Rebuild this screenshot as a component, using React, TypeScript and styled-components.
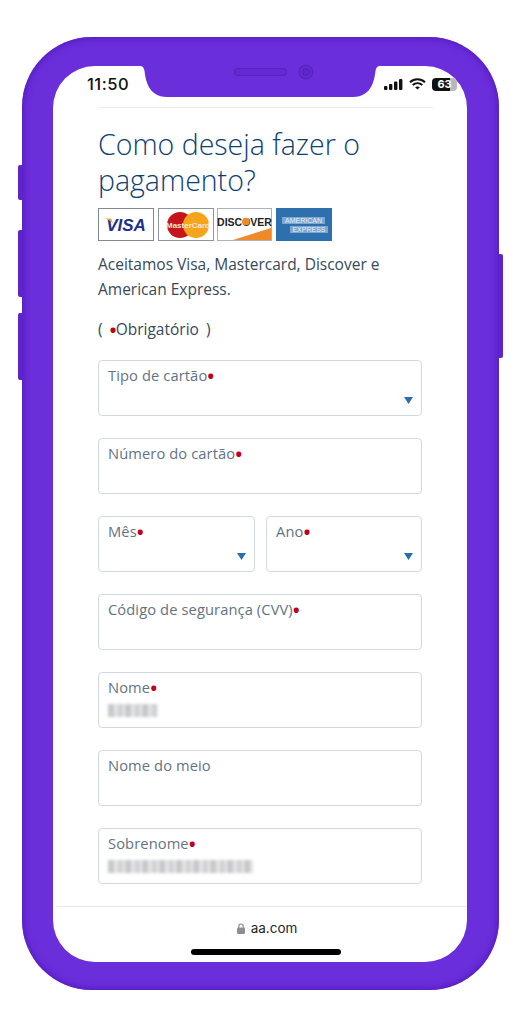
import React from 'react';
import styled, { createGlobalStyle } from 'styled-components';

const purple = '#6a2edb';
const textFont = `'Open Sans', 'Noto Sans', sans-serif`;

const GlobalStyle = createGlobalStyle`
  html, body {
    margin: 0;
    background: #fff;
  }
  * {
    box-sizing: border-box;
  }
`;

// --------------- Phone shell

const Page = styled.div`
  width: 522px;
  height: 1024px;
  padding: 37px 23px 0 22px;
  overflow: hidden;
`;

const Phone = styled.div`
  position: relative;
  width: 477px;
  height: 953px;
  padding: 29px 32px 28px 31px;
  border-radius: 70px;
  background: ${purple};
  box-shadow: inset 0 0 7px 1px #5119b8;
`;

const SideButton = styled.span<{ $side: 'left' | 'right'; $top: number; $height: number }>`
  position: absolute;
  ${(p) => p.$side}: -4px;
  top: ${(p) => p.$top}px;
  width: 4px;
  height: ${(p) => p.$height}px;
  border-radius: ${(p) => (p.$side === 'left' ? '2px 0 0 2px' : '0 2px 2px 0')};
  background: #5f25cb;
`;

const Screen = styled.div`
  display: flex;
  flex-direction: column;
  height: 896px;
  border-radius: 42px;
  background: #fff;
  overflow: hidden;
`;

const NotchShape = styled.svg`
  position: absolute;
  left: 118px;
  top: 23px;
`;

const Notch = () => (
  <NotchShape width="240" height="42" viewBox="0 0 240 42">
    <path
      d="M0 6C3 6 4 8 4.5 11C5.5 19 8 37 27 37H213C232 37 234.5 19 235.5 11C236 8 237 6 240 6Z"
      fill={purple}
    />
    <rect x="94.5" y="8.5" width="52" height="7" rx="3.5" fill="#6429d2" stroke="#5722bd" />
    <circle cx="166" cy="12" r="7" fill="#6429d2" stroke="#5722bd" />
    <circle cx="166" cy="12" r="3.5" fill="#5f26cc" stroke="#5722bd" />
  </NotchShape>
);

// --------------- Status bar

const StatusBar = styled.div`
  display: flex;
  justify-content: space-between;
  align-items: center;
  height: 41px;
  padding: 0 10px 5px 34px;
  flex: none;
`;

const Clock = styled.span`
  font-family: Inter, sans-serif;
  font-size: 16.5px;
  font-weight: 500;
  letter-spacing: 0.5px;
  color: #111;
`;

const StatusIcons = styled.div`
  display: flex;
  align-items: center;
  gap: 6px;
`;

const Battery = styled.span`
  display: flex;
  align-items: center;
  justify-content: center;
  width: 25px;
  height: 13px;
  border-radius: 4px;
  background: linear-gradient(90deg, #111 0 70%, #b9b9b9 70% 100%);
  color: #fff;
  font-family: Inter, sans-serif;
  font-size: 11px;
  font-weight: 700;
`;

const Signal = () => (
  <svg width="19" height="11" viewBox="0 0 19 11" fill="#111">
    <rect x="0" y="7" width="3.4" height="4" rx="1" />
    <rect x="5" y="5" width="3.4" height="6" rx="1" />
    <rect x="10" y="2.5" width="3.4" height="8.5" rx="1" />
    <rect x="15" y="0" width="3.4" height="11" rx="1" />
  </svg>
);

const Wifi = () => (
  <svg width="17" height="12" viewBox="0 0 17 12" fill="none" stroke="#111" strokeWidth="2">
    <path d="M1 4.2C5.2 .3 11.8 .3 16 4.2" />
    <path d="M3.7 7C6.5 4.5 10.5 4.5 13.3 7" />
    <path d="M8.5 11.6L6.1 9.3C7.5 8.2 9.5 8.2 10.9 9.3Z" fill="#111" stroke="none" />
  </svg>
);

const Divider = styled.div`
  height: 1px;
  margin: 0 34px 0 45px;
  background: #ececec;
  flex: none;
`;

// --------------- Content

const Content = styled.main`
  flex: 1;
  min-height: 0;
  padding: 18px 45px 0;
  overflow: hidden;
  font-family: ${textFont};
`;

const Title = styled.h1`
  margin: 0;
  font-size: 28.5px;
  font-weight: 300;
  line-height: 36px;
  color: #0e3f73;
`;

const CardRow = styled.div`
  display: flex;
  gap: 3.5px;
  margin-top: 10px;
  height: 33px;
`;

const CardSvg = styled.svg`
  display: block;
  flex: none;
`;

const VisaCard = () => (
  <CardSvg width="56" height="33" viewBox="0 0 56 33">
    <rect x="0.5" y="0.5" width="55" height="32" fill="#fff" stroke="#7f8a95" />
    <text x="28" y="22.5" textAnchor="middle" fontFamily="'Liberation Sans', sans-serif" fontSize="17" fontWeight="700" fontStyle="italic" fill="#1b2f8c">
      VISA
    </text>
    <path d="M6.5 10.5H13L15 15.5C13 13 10 11.5 6.5 10.5Z" fill="#f0a033" />
  </CardSvg>
);

const MasterCard = () => (
  <CardSvg width="56" height="33" viewBox="0 0 56 33">
    <rect x="0.5" y="0.5" width="55" height="32" fill="#fff" stroke="#8b96a0" />
    <circle cx="22" cy="17" r="13" fill="#c4161c" />
    <circle cx="38" cy="17" r="13" fill="#f7a41d" />
    <text x="30" y="20" textAnchor="middle" fontFamily="'Liberation Sans', sans-serif" fontSize="8" fontWeight="700" fill="#f8e8d8">
      MasterCard
    </text>
  </CardSvg>
);

const DiscoverCard = () => (
  <CardSvg width="55" height="33" viewBox="0 0 55 33">
    <rect x="0.5" y="0.5" width="54" height="32" fill="#fff" stroke="#a9b3bc" />
    <path d="M16 32L54 20V32Z" fill="#ee8a2a" />
    <text x="27.5" y="17.5" textAnchor="middle" fontFamily="'Liberation Sans', sans-serif" fontSize="10.5" fontWeight="700" fill="#222">
      DISCOVER
    </text>
    <circle cx="29" cy="13.5" r="3.8" fill="#ee8a2a" />
  </CardSvg>
);

const AmexCard = () => (
  <CardSvg width="56" height="33" viewBox="0 0 56 33">
    <rect width="56" height="33" fill="#2e6fae" />
    <rect x="6" y="9" width="43" height="7" fill="#7ea7cf" />
    <rect x="14" y="18" width="38" height="7" fill="#7ea7cf" />
    <text x="27.5" y="15" textAnchor="middle" fontFamily="'Liberation Sans', sans-serif" fontSize="7" fill="#e6eef6">
      AMERICAN
    </text>
    <text x="33" y="24" textAnchor="middle" fontFamily="'Liberation Sans', sans-serif" fontSize="7" fill="#e6eef6">
      EXPRESS
    </text>
  </CardSvg>
);

const Paragraph = styled.p<{ $top: number; $wordGap?: number }>`
  margin: ${(p) => p.$top}px 0 0;
  font-size: 15.5px;
  line-height: 25px;
  word-spacing: ${(p) => p.$wordGap ?? 0}px;
  color: #36495a;
`;

const Required = styled.span`
  display: inline-block;
  margin: 0 -2px 0 -1px;
  font-size: 24px;
  line-height: 0;
  vertical-align: -3.5px;
  color: #c30019;
`;

const Form = styled.form`
  display: grid;
  grid-template-columns: 157px 156px;
  justify-content: space-between;
  row-gap: 22px;
  margin-top: 18px;
`;

const Field = styled.div<{ $half?: boolean }>`
  grid-column: ${(p) => (p.$half ? 'auto' : '1 / -1')};
  display: flex;
  flex-direction: column;
  height: 56px;
  padding: 4px 8px 0 9px;
  border: 1px solid #d2d8df;
  border-radius: 4px;
  background: #fff;
`;

const Label = styled.label`
  font-size: 14.7px;
  letter-spacing: 0.1px;
  line-height: 20px;
  color: #647383;
`;

const ValueRow = styled.div`
  display: flex;
  align-items: center;
  height: 20px;
  margin-top: 3px;
`;

const Arrow = styled.svg`
  margin: 4px 0 0 auto;
`;

const Redacted = styled.span<{ $width: number }>`
  display: block;
  width: ${(p) => p.$width}px;
  height: 13px;
  background: repeating-linear-gradient(90deg, #c6c8cc 0 6px, #e2e4e6 6px 10px, #cfd1d4 10px 15px, #eceded 15px 17px);
  filter: blur(1.5px);
`;

const FieldBox = ({
  label,
  required,
  half,
  select,
  redacted,
}: {
  label: string;
  required?: boolean;
  half?: boolean;
  select?: boolean;
  redacted?: number;
}) => (
  <Field $half={half}>
    <Label>
      {label}
      {required && <Required>•</Required>}
    </Label>
    <ValueRow>
      {redacted && <Redacted $width={redacted} />}
      {select && (
        <Arrow width="9" height="7" viewBox="0 0 9 7">
          <path d="M0 0H9L4.5 7Z" fill="#2a6db0" />
        </Arrow>
      )}
    </ValueRow>
  </Field>
);

// --------------- Browser footer

const BrowserBar = styled.footer`
  flex: none;
  display: flex;
  flex-direction: column;
  align-items: center;
  height: 56px;
  margin-left: 4px;
  padding-top: 10px;
  border-top: 1px solid #e6e6e6;
`;

const Address = styled.div`
  display: flex;
  align-items: center;
  gap: 6px;
  height: 22px;
  margin-left: 10px;
  font-family: Inter, sans-serif;
  font-size: 13.5px;
  color: #23272b;
`;

const HomeIndicator = styled.div`
  width: 150px;
  height: 6px;
  margin: 10px 0 0 8px;
  border-radius: 3px;
  background: #000;
`;

const Lock = () => (
  <svg width="8" height="11" viewBox="0 0 8 11">
    <path d="M1.8 5V3.2a2.2 2.2 0 0 1 4.4 0V5" fill="none" stroke="#8b9096" strokeWidth="1.2" />
    <rect x="0" y="4.6" width="8" height="6.4" rx="1.2" fill="#8b9096" />
  </svg>
);

const App = () => (
  <Page>
    <GlobalStyle />
    <Phone>
      <SideButton $side="left" $top={128} $height={35} />
      <SideButton $side="left" $top={193} $height={67} />
      <SideButton $side="left" $top={276} $height={67} />
      <SideButton $side="right" $top={217} $height={104} />
      <Screen>
        <StatusBar>
          <Clock>11:50</Clock>
          <StatusIcons>
            <Signal />
            <Wifi />
            <Battery>63</Battery>
          </StatusIcons>
        </StatusBar>
        <Divider />
        <Content>
          <Title>
            Como deseja fazer o
            <br />
            pagamento?
          </Title>
          <CardRow>
            <VisaCard />
            <MasterCard />
            <DiscoverCard />
            <AmexCard />
          </CardRow>
          <Paragraph $top={11}>
            Aceitamos Visa, Mastercard, Discover e
            <br />
            American Express.
          </Paragraph>
          <Paragraph $top={15} $wordGap={3}>
            ( <Required>•</Required>Obrigatório )
          </Paragraph>
          <Form>
            <FieldBox label="Tipo de cartão" required select />
            <FieldBox label="Número do cartão" required />
            <FieldBox label="Mês" required half select />
            <FieldBox label="Ano" required half select />
            <FieldBox label="Código de segurança (CVV)" required />
            <FieldBox label="Nome" required redacted={50} />
            <FieldBox label="Nome do meio" />
            <FieldBox label="Sobrenome" required redacted={145} />
          </Form>
        </Content>
        <BrowserBar>
          <Address>
            <Lock />
            aa.com
          </Address>
          <HomeIndicator />
        </BrowserBar>
      </Screen>
      <Notch />
    </Phone>
  </Page>
);

export default App;
